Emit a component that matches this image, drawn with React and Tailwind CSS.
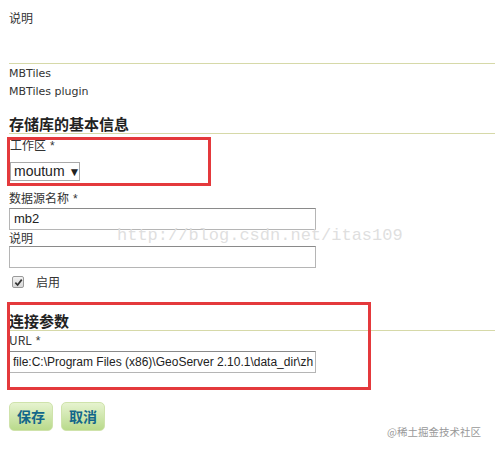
import React from "react";

const cjk = "font-['Noto_Sans_CJK_SC','Noto_Sans',sans-serif]";

const Label = ({ children, star }) => (
  <div className={`text-[12px] leading-[16px] text-[#333] ${cjk}`}>
    {children}
    {star && <span className="ml-[4px] font-['Liberation_Sans',sans-serif]">*</span>}
  </div>
);

const TextInput = ({ value = "", size = "text-[13px]", className = "" }) => (
  <div
    className={`h-[22px] w-[307px] border border-[#b5b5b5] border-t-[#8a8a8a] bg-white leading-[20px] text-[#222] overflow-hidden whitespace-nowrap font-['Liberation_Sans',sans-serif] ${size} ${className}`}
  >
    {value}
  </div>
);

const Heading = ({ children }) => (
  <div className="border-b border-[#d6d9a8] pb-[1px]">
    <div className={`text-[15px] leading-[17px] font-bold text-[#222] ${cjk}`}>{children}</div>
  </div>
);

const Button = ({ children }) => (
  <button
    className={`h-[29px] w-[44px] rounded-[5px] border border-[#cfe3ab] bg-gradient-to-b from-[#e6f3cf] to-[#b9da8b] text-[14px] font-bold text-[#13678a] ${cjk}`}
  >
    {children}
  </button>
);

export default function App() {
  return (
    <div className="relative min-h-[452px] w-[495px] overflow-hidden bg-white">
      <div className="pl-[9px]">
        <div className="pt-[10px]">
          <Label>说明</Label>
        </div>
        <div className="mt-[37px] border-t border-[#d6d9a8]" />
        <div className="pt-[1px] font-['DejaVu_Sans',sans-serif] text-[11px] leading-[18px] text-[#333]">
          <div>MBTiles</div>
          <div>MBTiles plugin</div>
        </div>
        <div className="mt-[14px]">
          <Heading>存储库的基本信息</Heading>
        </div>

        <div className="mt-[3px] pl-[1px]">
          <Label star>工作区</Label>
          <div className="mt-[8px] flex h-[19px] w-[70px] items-center border border-[#a9a9a9] bg-white pl-[3px] font-['Liberation_Sans',sans-serif] text-[14px] text-[#222]">
            <span>moutum</span>
            <span className="ml-[4px] text-[12px]">▼</span>
          </div>
        </div>

        <div className="mt-[9px]">
          <Label star>数据源名称</Label>
          <TextInput value="mb2" className="mt-[1px] pl-[4px]" />
          <Label>说明</Label>
          <TextInput className="mt-0" />
          <div className="mt-[6px] flex items-center">
            <span className="ml-[3px] flex h-[12px] w-[12px] items-center justify-center rounded-[2px] border border-[#9a9a9a] bg-gradient-to-b from-[#f2f2f2] to-[#d8d8d8]">
              <svg width="9" height="9" viewBox="0 0 10 10">
                <path d="M1.5 5.2 L4 7.8 L8.6 1.8" fill="none" stroke="#333" strokeWidth="1.9" />
              </svg>
            </span>
            <span className={`ml-[12px] text-[12px] leading-[16px] text-[#333] ${cjk}`}>启用</span>
          </div>
        </div>

        <div className="mt-[22px]">
          <Heading>连接参数</Heading>
        </div>
        <div className="mt-[1px]">
          <Label star>URL</Label>
          <TextInput
            value="file:C:\Program Files (x86)\GeoServer 2.10.1\data_dir\zh"
            size="text-[12px]"
            className="mt-[2px] pl-[3px]"
          />
        </div>

        <div className="mt-[29px] flex gap-[8px]">
          <Button>保存</Button>
          <Button>取消</Button>
        </div>
      </div>

      {/* watermark */}
      <div className="pointer-events-none absolute left-[117px] top-[226px] font-['Liberation_Mono',monospace] text-[17px] leading-[20px] text-[#dfdfdf]">
        http://blog.csdn.net/itas109
      </div>

      {/* red annotation boxes */}
      <div className="pointer-events-none absolute left-[7px] top-[137px] h-[49px] w-[204px] border-[3px] border-[#e4393c]" />
      <div className="pointer-events-none absolute left-[7px] top-[302px] h-[88px] w-[364px] border-[3px] border-[#e4393c]" />

      <div className={`absolute left-[387px] top-[424px] text-[10.5px] leading-[16px] text-[#999] ${cjk}`}>
        @稀土掘金技术社区
      </div>
    </div>
  );
}
